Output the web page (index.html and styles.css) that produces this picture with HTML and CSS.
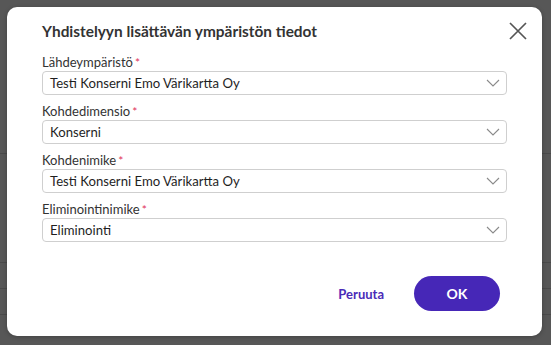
FILE: index.html
```html
<!DOCTYPE html>
<html lang="fi">
<head>
<meta charset="utf-8">
<title>Yhdistelyyn lisättävän ympäristön tiedot</title>
<link rel="stylesheet" href="styles.css">
</head>
<body>
<div class="app">
  <div class="app-line l1"></div>
  <div class="app-line l2"></div>
  <div class="app-line l3"></div>
  <div class="app-line l4"></div>
</div>
<div class="backdrop">
  <div class="modal" role="dialog">
    <div class="modal-head">
      <h1 class="title">Yhdistelyyn lisättävän ympäristön tiedot</h1>
      <button class="close" aria-label="Sulje">
        <svg width="18" height="18" viewBox="0 0 18 18"><path d="M1 1 L17 17 M17 1 L1 17" stroke="#555" stroke-width="1.7" fill="none"/></svg>
      </button>
    </div>
    <div class="fields">
      <div class="field">
        <label class="label">Lähdeympäristö<span class="req">*</span></label>
        <div class="select"><span class="value">Testi Konserni Emo Värikartta Oy</span><svg class="chev" width="14" height="8" viewBox="0 0 14 8"><path d="M1 1 L7 7 L13 1" stroke="#8a8a8a" stroke-width="1.1" fill="none"/></svg></div>
      </div>
      <div class="field">
        <label class="label">Kohdedimensio<span class="req">*</span></label>
        <div class="select"><span class="value">Konserni</span><svg class="chev" width="14" height="8" viewBox="0 0 14 8"><path d="M1 1 L7 7 L13 1" stroke="#8a8a8a" stroke-width="1.1" fill="none"/></svg></div>
      </div>
      <div class="field">
        <label class="label">Kohdenimike<span class="req">*</span></label>
        <div class="select"><span class="value">Testi Konserni Emo Värikartta Oy</span><svg class="chev" width="14" height="8" viewBox="0 0 14 8"><path d="M1 1 L7 7 L13 1" stroke="#8a8a8a" stroke-width="1.1" fill="none"/></svg></div>
      </div>
      <div class="field">
        <label class="label">Eliminointinimike<span class="req">*</span></label>
        <div class="select"><span class="value">Eliminointi</span><svg class="chev" width="14" height="8" viewBox="0 0 14 8"><path d="M1 1 L7 7 L13 1" stroke="#8a8a8a" stroke-width="1.1" fill="none"/></svg></div>
      </div>
    </div>
    <div class="footer">
      <button class="btn-text">Peruuta</button>
      <button class="btn-primary">OK</button>
    </div>
  </div>
</div>
</body>
</html>
```
FILE: styles.css
```css
* { box-sizing: border-box; }
html, body { margin: 0; padding: 0; }
body {
  width: 551px;
  height: 345px;
  overflow: hidden;
  background: #575757;
  font-family: Lato, "Noto Sans", sans-serif;
  position: relative;
}
.app { position: absolute; inset: 0; }
.app-line { position: absolute; left: 0; right: 0; height: 1px; background: #4a4a4a; }
.l1 { top: 153px; }
.l2 { top: 262px; }
.l3 { top: 288px; }
.l4 { top: 314px; }
.backdrop {
  position: absolute;
  inset: 0;
  padding: 7px 9px 9px 7px;
}
.modal {
  width: 535px;
  height: 329px;
  background: #fff;
  border-radius: 10px;
  box-shadow: 0 1px 4px rgba(0,0,0,0.25);
  padding: 14px 35px 25px 35px;
  display: flex;
  flex-direction: column;
}
.modal-head {
  display: flex;
  align-items: flex-start;
  justify-content: space-between;
  height: 20px;
  margin-bottom: 13px;
}
.title {
  margin: 0;
  font-size: 15.4px;
  line-height: 20px;
  font-weight: 700;
  color: #333;
}
.close {
  border: 0;
  background: none;
  padding: 0;
  margin: 1px -20px 0 0;
  width: 18px;
  height: 18px;
  cursor: pointer;
}
.close svg { display: block; }
.fields { display: flex; flex-direction: column; gap: 8px; }
.field { display: flex; flex-direction: column; gap: 1px; }
.label {
  display: block;
  height: 16px;
  font-size: 13px;
  line-height: 16px;
  color: #333;
}
.req { color: #e0325a; margin-left: 2px; font-size: 12px; line-height: 0; }
.select {
  height: 24px;
  border: 1px solid #cfcfcf;
  border-radius: 4px;
  display: flex;
  align-items: center;
  justify-content: space-between;
  padding: 0 6px 0 7px;
}
.value { font-size: 13.15px; color: #1f1f1f; }
.chev { display: block; }
.footer {
  margin-top: auto;
  display: flex;
  justify-content: flex-end;
  align-items: center;
  gap: 30px;
  margin-right: 7px;
}
.btn-text {
  border: 0;
  background: none;
  padding: 0;
  font-family: inherit;
  font-size: 13px;
  font-weight: 700;
  color: #4a2bb8;
}
.btn-primary {
  width: 86px;
  height: 35px;
  border: 0;
  border-radius: 18px;
  background: #4627b7;
  color: #fff;
  font-family: inherit;
  font-size: 14px;
  font-weight: 700;
}
```
